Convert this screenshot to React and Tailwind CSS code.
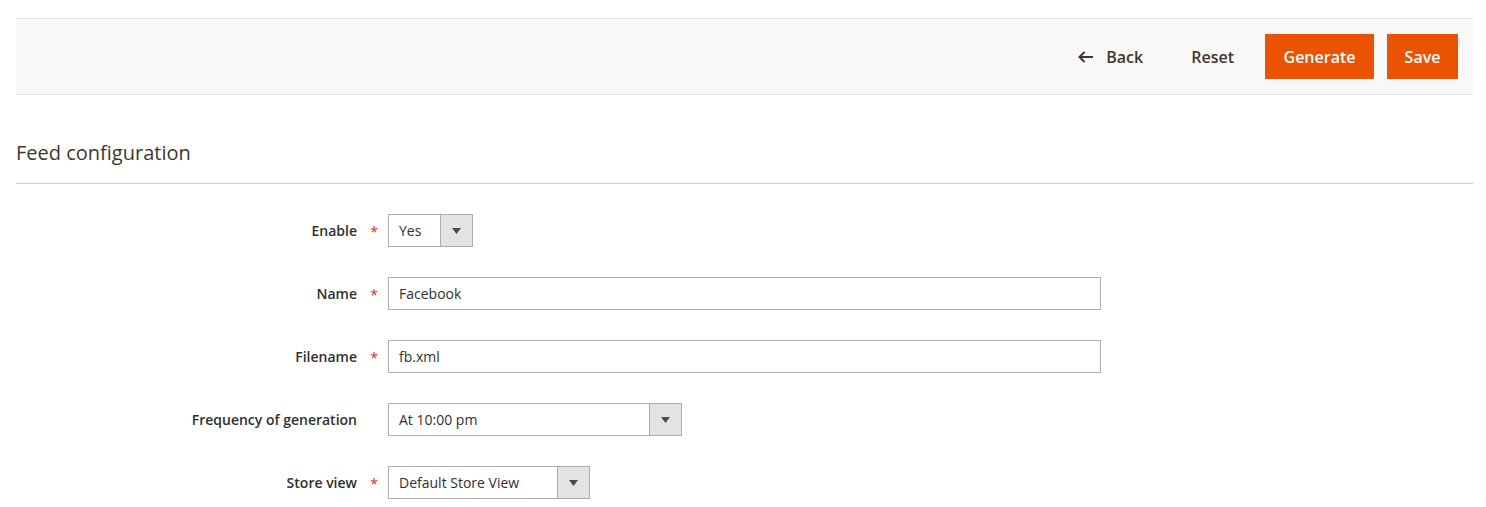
import React from "react";

const font = { fontFamily: "'Open Sans', 'Liberation Sans', sans-serif" };

function Arrow() {
  return (
    <svg width="9" height="6" viewBox="0 0 9 6" className="fill-[#514943]">
      <path d="M0 0 H9 L4.5 6 Z" />
    </svg>
  );
}

function Row({ label, required, children }) {
  return (
    <div className="flex items-center">
      <div className="relative w-[372px] pr-[31px] text-right text-sm font-semibold text-[#303030]">
        {label}
        {required && (
          <span className="absolute right-[10px] top-[1px] text-[#e22626] font-normal">*</span>
        )}
      </div>
      {children}
    </div>
  );
}

function Input({ value, width }) {
  return (
    <div className={`h-[33px] ${width} border border-[#adadad] bg-white flex items-center pl-[10px] text-sm text-[#303030]`}>
      {value}
    </div>
  );
}

function Select({ value, width }) {
  return (
    <div className={`h-[33px] ${width} border border-[#adadad] bg-white flex items-stretch text-sm text-[#303030]`}>
      <div className="flex-1 flex items-center pl-[10px]">{value}</div>
      <div className="w-[32px] border-l border-[#adadad] bg-[#e3e3e3] flex items-center justify-center">
        <Arrow />
      </div>
    </div>
  );
}

export default function App() {
  return (
    <div className="bg-white min-h-[507px] pl-4 pr-[13px] pt-[18px]" style={font}>
      {/* Page actions */}
      <div className="h-[77px] bg-[#f8f8f8] border-t border-b border-[#e3e3e3] flex items-center justify-end pr-[15px]">
        <button className="flex items-center text-base font-semibold text-[#41362f] mr-[48px]">
          <svg width="16" height="12" viewBox="0 0 16 12" className="mr-[12px]" fill="none" stroke="#41362f" strokeWidth="2">
            <path d="M6.5 1 L1.5 6 L6.5 11 M1.5 6 H15" />
          </svg>
          Back
        </button>
        <button className="text-base font-semibold text-[#41362f] mr-[31px]">Reset</button>
        <button className="h-[45px] w-[109px] bg-[#eb5202] text-white text-base font-semibold mr-[13px]">Generate</button>
        <button className="h-[45px] w-[71px] bg-[#eb5202] text-white text-base font-semibold">Save</button>
      </div>

      {/* Section title */}
      <div className="mt-[44px] pb-[16px] border-b border-[#cccccc]">
        <h2 className="text-xl leading-7 text-[#41362f]">Feed configuration</h2>
      </div>

      {/* Form */}
      <div className="mt-[30px] flex flex-col gap-[30px]">
        <Row label="Enable" required>
          <Select value="Yes" width="w-[85px]" />
        </Row>
        <Row label="Name" required>
          <Input value="Facebook" width="w-[713px]" />
        </Row>
        <Row label="Filename" required>
          <Input value="fb.xml" width="w-[713px]" />
        </Row>
        <Row label="Frequency of generation">
          <Select value="At 10:00 pm" width="w-[294px]" />
        </Row>
        <Row label="Store view" required>
          <Select value="Default Store View" width="w-[202px]" />
        </Row>
      </div>
    </div>
  );
}
